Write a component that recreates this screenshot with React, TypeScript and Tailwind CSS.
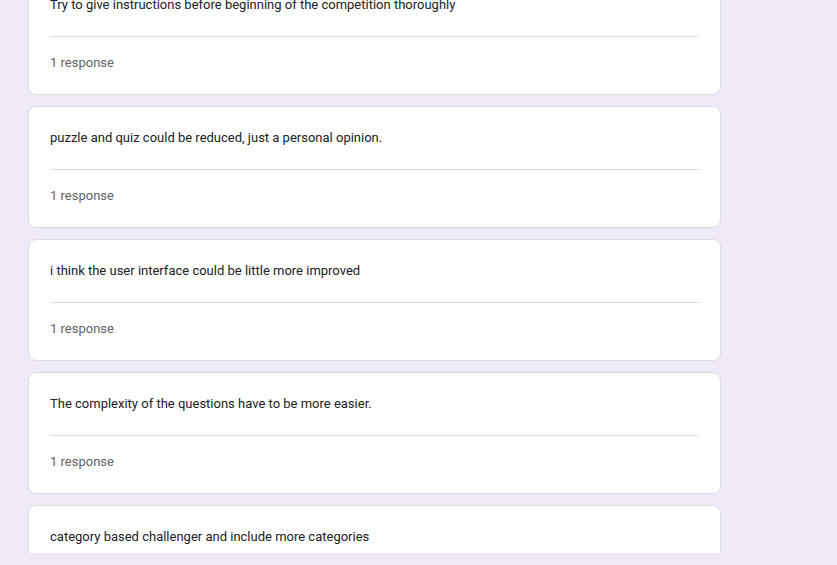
const answers = [
  'Try to give instructions before beginning of the competition thoroughly',
  'puzzle and quiz could be reduced, just a personal opinion.',
  'i think the user interface could be little more improved',
  'The complexity of the questions have to be more easier.',
  'category based challenger and include more categories',
];

function AnswerCard({ text }: { text: string }) {
  return (
    <div className="h-[122px] shrink-0 rounded-lg border border-[#dadce0] bg-white px-[21px] pt-[23px]">
      <p className="text-[13px] leading-[15px] text-[#202124]">{text}</p>
      <div className="mt-[24px] border-t border-[#dadce0]" />
      <p className="pt-[17px] text-[13px] leading-[18px] text-[#5f6368]">1 response</p>
    </div>
  );
}

export default function App() {
  return (
    <div
      className="h-[565px] w-[837px] overflow-hidden bg-[#f0e9f8]"
      style={{ fontFamily: 'Roboto, "Noto Sans", Arial, sans-serif' }}
    >
      <div className="h-[553px] overflow-hidden">
        <div className="-mt-[27px] ml-[28px] flex w-[693px] flex-col gap-[11px]">
          {answers.map((a) => (
            <AnswerCard key={a} text={a} />
          ))}
        </div>
      </div>
    </div>
  );
}
